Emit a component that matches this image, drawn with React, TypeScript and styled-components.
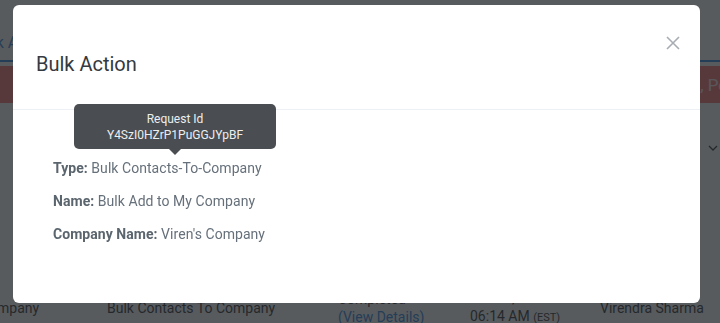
import React from "react";
import styled, { createGlobalStyle } from "styled-components";

const GlobalStyle = createGlobalStyle`
  html, body {
    margin: 0;
    padding: 0;
    background: #f7f9fb;
    font-family: Roboto, "Liberation Sans", Arial, sans-serif;
    overflow: hidden;
  }
`;

const Page = styled.div`
  width: 720px;
  height: 323px;
  overflow: hidden;
  background: #f7f9fb;
`;

const Tabs = styled.div`
  display: flex;
  height: 62px;
  align-items: flex-end;
  padding-bottom: 7px;
  box-sizing: border-box;
  border-bottom: 2px solid #2e86de;
`;

const Tab = styled.span`
  margin-left: -27px;
  font-size: 16px;
  line-height: 20px;
  color: #3d8be0;
  white-space: nowrap;
`;

const Alert = styled.div`
  margin-top: 4px;
  height: 37px;
  background: #fa7672;
  display: flex;
  align-items: center;
  padding-left: 632px;
  box-sizing: border-box;
  color: #fde8e8;
  font-size: 17px;
  white-space: nowrap;
  overflow: hidden;
`;

const Chevron = styled.div`
  display: flex;
  justify-content: flex-end;
  padding: 40px 2px 0 0;
`;

const Row = styled.div`
  display: grid;
  grid-template-columns: 107px 231px 132px 130px 1fr;
  margin-top: 136px;
  font-size: 14px;
  line-height: 18px;
  color: #333;
`;

const Cell = styled.div<{ $shift?: number }>`
  display: flex;
  flex-direction: column;
  justify-content: center;
  margin-left: ${(p) => p.$shift ?? 0}px;
  white-space: nowrap;
`;

const Link = styled.span`
  color: #2e86de;
`;

const Small = styled.span`
  font-size: 11px;
`;

const Overlay = styled.div`
  position: fixed;
  inset: 0;
  background: rgba(33, 37, 41, 0.75);
  display: flex;
  align-items: flex-start;
  padding: 5px 0 0 13px;
`;

const Modal = styled.div`
  width: 687px;
  height: 298px;
  background: #fff;
  border-radius: 6px;
  display: flex;
  flex-direction: column;
`;

const Header = styled.div`
  height: 105px;
  border-bottom: 1px solid #edf1f5;
  display: flex;
  justify-content: space-between;
  align-items: flex-start;
  padding: 0 20px 0 23px;
  box-sizing: border-box;
`;

const Title = styled.h4`
  margin: 47px 0 0;
  font-size: 20px;
  font-weight: 400;
  color: #343a40;
  line-height: 24px;
`;

const Close = styled.button`
  margin-top: 31px;
  border: 0;
  background: none;
  padding: 0;
  width: 14px;
  height: 14px;
  display: flex;
  cursor: pointer;
`;

const Body = styled.div`
  position: relative;
  padding: 48px 40px 0;
  display: flex;
  flex-direction: column;
  gap: 13px;
`;

const Line = styled.div`
  font-size: 14px;
  line-height: 20px;
  color: #66707a;
  letter-spacing: 0.05px;
`;

const Label = styled.strong`
  font-weight: 700;
  color: #5b656e;
`;

const Tooltip = styled.div`
  position: absolute;
  top: -6px;
  left: 61px;
  width: 202px;
  box-sizing: border-box;
  padding: 7px 10px 6px;
  background: #4a4d51;
  border-radius: 5px;
  color: #eceeef;
  font-size: 12px;
  line-height: 16px;
  text-align: center;

  &::after {
    content: "";
    position: absolute;
    left: 95px;
    bottom: -6px;
    border-left: 6px solid transparent;
    border-right: 6px solid transparent;
    border-top: 6px solid #4a4d51;
  }
`;

export default function App() {
  return (
    <>
      <GlobalStyle />
      <Page>
        <Tabs>
          <Tab>Bulk Actions</Tab>
        </Tabs>
        <Alert>Contacts, Pending</Alert>
        <Chevron>
          <svg width="10" height="10" viewBox="0 0 10 10">
            <path d="M1 3 L5 7 L9 3" stroke="#333" strokeWidth="1.3" fill="none" />
          </svg>
        </Chevron>
        <Row>
          <Cell $shift={-20}>Company</Cell>
          <Cell>Bulk Contacts To Company</Cell>
          <Cell>
            <span>Completed</span>
            <Link>(View Details)</Link>
          </Cell>
          <Cell>
            <span>Feb 25, 2021</span>
            <span>06:14 AM <Small>(EST)</Small></span>
          </Cell>
          <Cell>Virendra Sharma</Cell>
        </Row>
      </Page>
      <Overlay>
        <Modal>
          <Header>
            <Title>Bulk Action</Title>
            <Close aria-label="Close">
              <svg width="14" height="14" viewBox="0 0 14 14">
                <path d="M1 1 L13 13 M13 1 L1 13" stroke="#a7adb3" strokeWidth="1.6" />
              </svg>
            </Close>
          </Header>
          <Body>
            <Tooltip>
              Request Id
              <br />
              Y4SzI0HZrP1PuGGJYpBF
            </Tooltip>
            <Line>
              <Label>Type:</Label> Bulk Contacts-To-Company
            </Line>
            <Line>
              <Label>Name:</Label> Bulk Add to My Company
            </Line>
            <Line>
              <Label>Company Name:</Label> Viren's Company
            </Line>
          </Body>
        </Modal>
      </Overlay>
    </>
  );
}
